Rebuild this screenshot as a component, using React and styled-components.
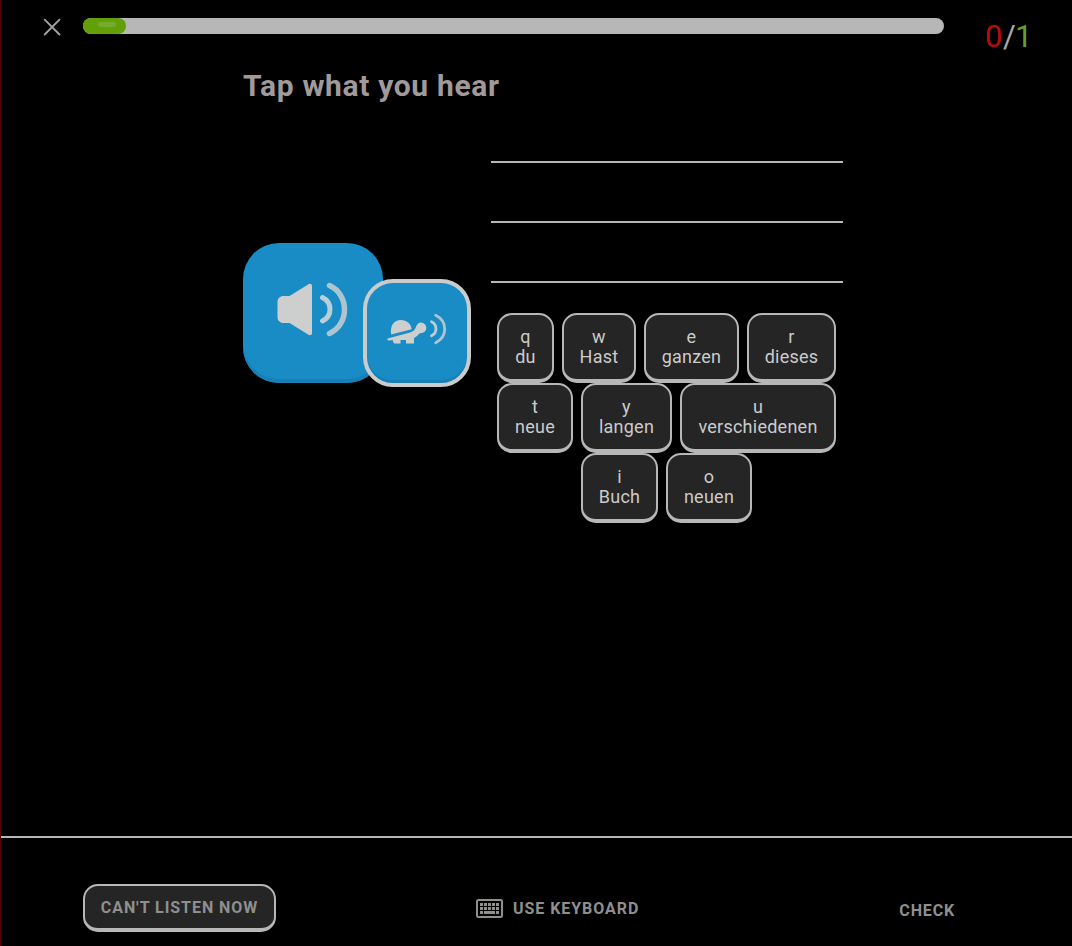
import React from "react";
import styled, { createGlobalStyle } from "styled-components";

const Global = createGlobalStyle`
  *, *::before, *::after { box-sizing: border-box; }
  body { margin: 0; background: #000; font-family: Roboto, "Liberation Sans", sans-serif; }
  button { font: inherit; margin: 0; padding: 0; border: 0; background: none; color: inherit; cursor: pointer; display: block; }
`;

const Page = styled.div`
  width: 1072px;
  height: 946px;
  display: flex;
  flex-direction: column;
  background: #000;
  border-left: 1px solid #560404;
  overflow: hidden;
`;

const Header = styled.header`
  display: flex;
  align-items: flex-start;
  height: 56px;
  padding: 18px 0 0 42px;
`;

const CloseButton = styled.button`
  width: 18px;
  height: 18px;
  margin-right: 22px;
  svg { display: block; }
`;

const ProgressTrack = styled.div`
  width: 861px;
  height: 16px;
  border-radius: 8px;
  background: #b7b7b7;
`;

const ProgressFill = styled.div`
  height: 16px;
  border-radius: 8px;
  background: #61a006;
  padding: 4px 10px 0 15px;
`;

const Shine = styled.div`
  height: 5px;
  border-radius: 3px;
  background: #76aa2b;
`;

const Score = styled.div`
  margin: 1px 0 0 41px;
  font-size: 31px;
  line-height: 36px;
  color: #a9a9a9;
  display: flex;
`;

const Digit = styled.span`
  color: ${(p) => p.$color};
  width: ${(p) => p.$width}px;
`;

const Main = styled.main`
  flex: 1;
  width: 600px;
  margin-left: 242px;
`;

const Title = styled.h1`
  margin: 10px 0 0;
  font-size: 30px;
  line-height: 40px;
  font-weight: 700;
  letter-spacing: 0.66px;
  color: #a09a9a;
  white-space: nowrap;
`;

const Exercise = styled.div`
  display: flex;
`;

const Speakers = styled.div`
  display: flex;
  align-items: flex-start;
  width: 248px;
  padding-top: 137px;
`;

const PlayButton = styled.button`
  width: 140px;
  height: 140px;
  flex: none;
  border-radius: 36px;
  background: #198cc5;
  box-shadow: inset 0 -4px 0 #1880b6;
  svg { display: block; }
`;

const SlowButton = styled.button`
  width: 108px;
  height: 108px;
  flex: none;
  margin: 36px 0 0 -20px;
  border: 4px solid #cacccc;
  border-radius: 30px;
  background: #198cc5;
  box-shadow: inset 0 -3px 0 #1880b6;
  svg { display: block; }
`;

const Answer = styled.div`
  width: 352px;
`;

const Line = styled.div`
  height: ${(p) => p.$height}px;
  border-bottom: 2px solid #b7b7b7;
`;

const Bank = styled.div`
  display: flex;
  flex-direction: column;
  align-items: center;
  padding: 30px 1px 0 0;
`;

const BankRow = styled.div`
  display: flex;
  gap: 8px;
`;

const Token = styled.button`
  width: ${(p) => p.$width}px;
  height: 70px;
  border: 2px solid #b7b7b7;
  border-bottom-width: 4px;
  border-radius: 15px;
  background: #252525;
  color: #cbcbcb;
  font-size: 18px;
  line-height: 20px;
  letter-spacing: 0.25px;
  text-align: center;
  white-space: nowrap;
  span { display: block; }
`;

const Footer = styled.footer`
  display: flex;
  align-items: flex-start;
  height: 110px;
  border-top: 2px solid #b7b7b7;
  padding: 46px 0 0 82px;
  font-size: 16px;
  font-weight: 700;
  color: #8f8f8f;
  white-space: nowrap;
`;

const SkipButton = styled.button`
  width: 193px;
  height: 48px;
  border: 2px solid #b7b7b7;
  border-bottom-width: 4px;
  border-radius: 15px;
  background: #252525;
  letter-spacing: 0.95px;
`;

const KeyboardButton = styled.button`
  display: flex;
  align-items: center;
  gap: 10px;
  height: 48px;
  margin-left: 200px;
  letter-spacing: 0.95px;
`;

const CheckButton = styled.button`
  height: 52px;
  margin-left: 260px;
  letter-spacing: 0.85px;
`;

const rows = [
  [["q", "du", 57], ["w", "Hast", 74], ["e", "ganzen", 95], ["r", "dieses", 89]],
  [["t", "neue", 76], ["y", "langen", 91], ["u", "verschiedenen", 156]],
  [["i", "Buch", 77], ["o", "neuen", 86]],
];

const Close = () => (
  <svg width="18" height="18" viewBox="0 0 18 18" fill="none" stroke="#a5a5a5" strokeWidth="1.8" strokeLinecap="round">
    <path d="M1.700 1.700 16.500 16.500M16.500 1.700 1.700 16.500" />
  </svg>
);

const Speaker = () => (
  <svg width="140" height="140" viewBox="0 0 140 140" fill="none">
    <path d="M40.500 53h6L65.500 41.300c1.500-1 3.500-.3 3.500 1.500v47.500c0 1.800-2 2.500-3.500 1.500L46.500 80h-6c-3.500 0-6-2.500-6-6V59c0-3.500 2.500-6 6-6Z" fill="#cdcfcf" />
    <path d="M79.500 54.500c10 5 10 18.500 0 23.500" stroke="#bcced5" strokeWidth="5" strokeLinecap="round" />
    <path d="M86.500 42.500c20 9 20 39 0 48" stroke="#aec5cf" strokeWidth="5.500" strokeLinecap="round" />
  </svg>
);

const Turtle = () => (
  <svg width="100" height="100" viewBox="0 0 100 100" fill="none">
    <path d="M24.200 51.500C22.500 43 27 37 34 37c5.500 0 9.800 3.500 10.700 9.200Z" fill="#cdcfcf" />
    <path d="M21.500 55.200 43 49.500c4-1.200 4.500-2.500 6-5.500a5.200 5.200 0 1 1 5 6c-2.500.2-3 3.500-7 5v5.500h-8V57h-5.500v3.500h-6.500l-1.500-3.500-3.500.5c-2 .3-2.300-1.800-.5-2.300Z" fill="#cdcfcf" />
    <path d="M64.500 38.700c6 3 6 11 0 14" stroke="#bcced5" strokeWidth="2.800" strokeLinecap="round" />
    <path d="M68.700 32.300c12 6 12 21.500 0 27.500" stroke="#aec5cf" strokeWidth="2.800" strokeLinecap="round" />
  </svg>
);

const keyColumns = [4, 8, 12, 16, 20];

const Keyboard = () => (
  <svg width="27" height="19" viewBox="0 0 27 19" fill="#8f8f8b">
    <rect x="1" y="1" width="25" height="17" rx="1.500" fill="none" stroke="#8f8f8b" strokeWidth="2" />
    {[4, 8].map((y) =>
      keyColumns.map((x) => <rect key={`${x}-${y}`} x={x} y={y} width="3" height="3" />)
    )}
    <rect x="4" y="12" width="3" height="3" />
    <rect x="8" y="12" width="11" height="3" />
    <rect x="20" y="12" width="3" height="3" />
  </svg>
);

export default function App() {
  return (
    <Page>
      <Global />
      <Header>
        <CloseButton aria-label="Close"><Close /></CloseButton>
        <ProgressTrack><ProgressFill style={{ width: "5%" }}><Shine /></ProgressFill></ProgressTrack>
        <Score>
          <Digit $color="#b60d0d" $width={18}>0</Digit>
          <Digit $width={12}>/</Digit>
          <Digit $color="#65a02c" $width={18}>1</Digit>
        </Score>
      </Header>
      <Main>
        <Title>Tap what you hear</Title>
        <Exercise>
          <Speakers>
            <PlayButton aria-label="Play"><Speaker /></PlayButton>
            <SlowButton aria-label="Play slowly"><Turtle /></SlowButton>
          </Speakers>
          <Answer>
            <Line $height={57} />
            <Line $height={60} />
            <Line $height={60} />
            <Bank>
              {rows.map((row, i) => (
                <BankRow key={i}>
                  {row.map(([key, word, width]) => (
                    <Token key={key} $width={width}><span>{key}</span><span>{word}</span></Token>
                  ))}
                </BankRow>
              ))}
            </Bank>
          </Answer>
        </Exercise>
      </Main>
      <Footer>
        <SkipButton>CAN'T LISTEN NOW</SkipButton>
        <KeyboardButton><Keyboard /><span>USE KEYBOARD</span></KeyboardButton>
        <CheckButton>CHECK</CheckButton>
      </Footer>
    </Page>
  );
}
